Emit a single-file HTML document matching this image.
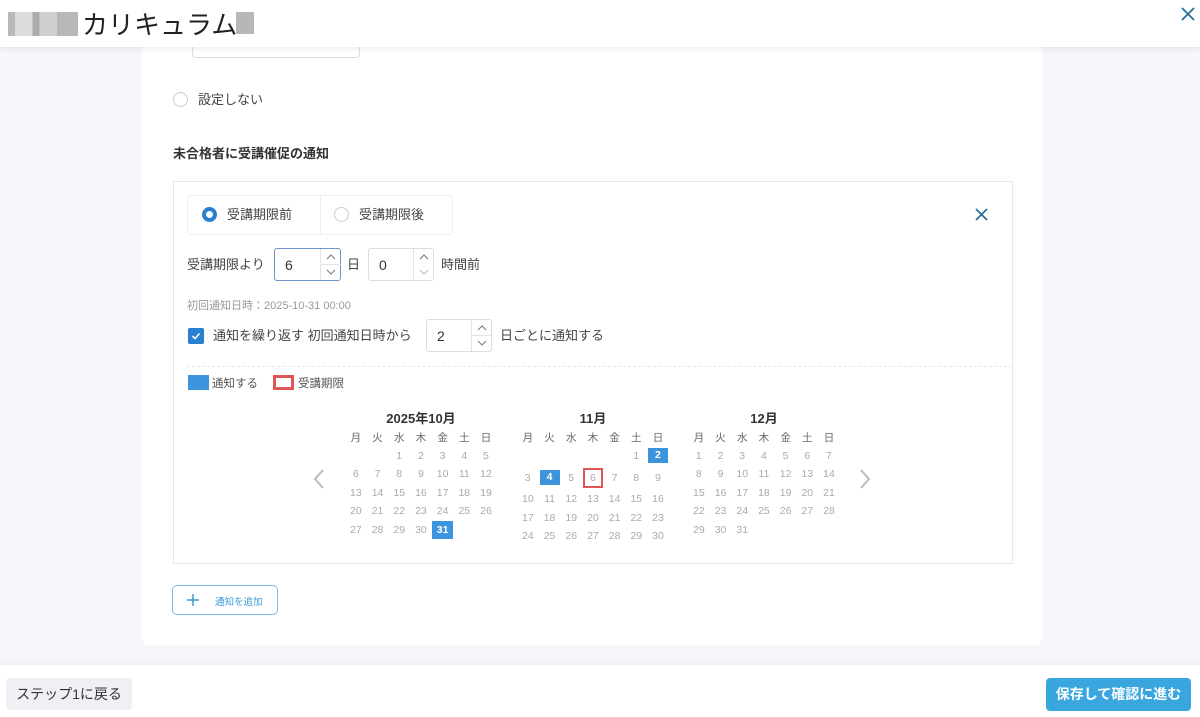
<!DOCTYPE html>
<html><head><meta charset="utf-8"><style>
*{box-sizing:border-box;margin:0;padding:0}
body{width:1200px;height:717px;overflow:hidden;background:#f5f7fa;font-family:"Liberation Sans","Noto Sans CJK JP",sans-serif;color:#333;position:relative}
.a{position:absolute}
.hdr{left:0;top:0;width:1200px;height:47px;background:#fff;box-shadow:0 2px 6px rgba(0,0,0,.08);z-index:2}
.card{left:142px;top:40px;width:900px;height:605px;background:#fff;border-radius:6px}
.foot{left:0;top:665px;width:1200px;height:52px;background:#fff;box-shadow:0 -2px 6px rgba(0,0,0,.05)}
.radio{width:15px;height:15px;border:1px solid #ccc;border-radius:50%;background:#fff}
.t13{font-size:13px;color:#444;line-height:16px}
.num{border:1px solid #ddd;border-radius:3px;background:#fff;height:33px}
.sp{position:absolute;right:0;top:0;width:20px;height:100%;border-left:1px solid #e3e3e3}
table{border-collapse:collapse;position:absolute;font-size:10.5px;color:#aaa}
td{width:21.7px;text-align:center;height:18.5px;padding:0}
tr.h td{color:#666}
td.b{background:#3b94dc;color:#fff;font-weight:bold}
.bx{display:inline-block;width:20px;height:15px;line-height:15px;background:#3b94dc;color:#fff;font-weight:bold}
.rx{display:inline-block;width:20px;height:20px;line-height:16px;border:2px solid #e05555}
.mt{font-size:13px;font-weight:bold;color:#333;position:absolute;text-align:center;width:152px}
</style></head><body>
<div class="a hdr">
<div class="a" style="left:8px;top:12px;width:70px;height:24px;background:linear-gradient(90deg,#999 0 10%,#ccc 10% 35%,#888 35% 45%,#bbb 45% 70%,#999 70%);opacity:.7"></div>
<div class="a" style="left:82px;top:5px;font-size:26px;color:#222">カリキュラム</div>
<div class="a" style="left:236px;top:12px;width:18px;height:22px;background:#999;opacity:.7"></div>
<svg class="a" style="left:1181px;top:7px" width="14" height="14"><path d="M1 1L13 13M13 1L1 13" stroke="#2a6f9a" stroke-width="1.8"/></svg>
</div>
<div class="a card"></div>
<div class="a" style="left:192px;top:40px;width:168px;height:18px;border:1px solid #ddd;border-top:0;border-radius:0 0 4px 4px"></div>
<div class="a radio" style="left:173px;top:92px"></div>
<div class="a t13" style="left:198px;top:92px">設定しない</div>
<div class="a" style="left:173px;top:143px;font-size:13px;font-weight:bold;color:#333">未合格者に受講催促の通知</div>
<div class="a" style="left:173px;top:181px;width:840px;height:383px;border:1px solid #e6e6e6"></div>
<div class="a" style="left:187px;top:195px;width:266px;height:40px;border:1px solid #eee;border-radius:4px"></div>
<div class="a" style="left:320px;top:195px;width:1px;height:40px;background:#eee"></div>
<div class="a radio" style="left:202px;top:207px;border:4.5px solid #2b7fd0"></div>
<div class="a t13" style="left:227px;top:207px">受講期限前</div>
<div class="a radio" style="left:334px;top:207px"></div>
<div class="a t13" style="left:359px;top:207px">受講期限後</div>
<svg class="a" style="left:975px;top:208px" width="13" height="13"><path d="M1 1L12 12M12 1L1 12" stroke="#2a6f9a" stroke-width="1.8"/></svg>
<div class="a t13" style="left:187px;top:257px">受講期限より</div>
<div class="a num" style="left:274px;top:248px;width:67px;border-color:#6f95c8"><span class="a" style="left:10px;top:8px;font-size:14px">6</span><div class="sp"><svg width="20" height="31"><path d="M6 10L10 6L14 10M6 21L10 25L14 21" stroke="#777" fill="none"/><path d="M0 15.5H20" stroke="#e3e3e3"/></svg></div></div>
<div class="a t13" style="left:347px;top:257px">日</div>
<div class="a num" style="left:368px;top:248px;width:66px"><span class="a" style="left:10px;top:8px;font-size:14px">0</span><div class="sp"><svg width="20" height="31"><path d="M6 10L10 6L14 10" stroke="#777" fill="none"/><path d="M6 21L10 25L14 21" stroke="#bbb" fill="none"/></svg></div></div>
<div class="a t13" style="left:441px;top:257px">時間前</div>
<div class="a" style="left:187px;top:297px;font-size:11px;color:#999">初回通知日時：2025-10-31 00:00</div>
<div class="a" style="left:188px;top:328px;width:16px;height:16px;background:#2b7fd0;border-radius:2px"><svg width="16" height="16"><path d="M4.5 8L7 10.5L11.5 5.5" stroke="#fff" stroke-width="1.5" fill="none"/></svg></div>
<div class="a t13" style="left:213px;top:328px">通知を繰り返す 初回通知日時から</div>
<div class="a num" style="left:426px;top:319px;width:66px"><span class="a" style="left:10px;top:8px;font-size:14px">2</span><div class="sp"><svg width="20" height="31"><path d="M6 10L10 6L14 10M6 21L10 25L14 21" stroke="#777" fill="none"/><path d="M0 15.5H20" stroke="#e3e3e3"/></svg></div></div>
<div class="a t13" style="left:500px;top:328px">日ごとに通知する</div>
<div class="a" style="left:187px;top:366px;width:825px;border-top:1px dashed #e6e6e6"></div>
<div class="a" style="left:188px;top:375px;width:21px;height:15px;background:#3b94dc"></div>
<div class="a" style="left:212px;top:375px;font-size:11.5px;color:#555">通知する</div>
<div class="a" style="left:273px;top:375px;width:21px;height:15px;border:3px solid #e05555"></div>
<div class="a" style="left:298px;top:375px;font-size:11.5px;color:#555">受講期限</div>
<svg class="a" style="left:313px;top:468px" width="12" height="22"><path d="M10 2L2 11L10 20" stroke="#bbb" stroke-width="2" fill="none"/></svg>
<svg class="a" style="left:859px;top:468px" width="12" height="22"><path d="M2 2L10 11L2 20" stroke="#bbb" stroke-width="2" fill="none"/></svg>
<div class="mt" style="left:345px;top:408px">2025年10月</div>
<div class="mt" style="left:517px;top:408px">11月</div>
<div class="mt" style="left:688px;top:408px">12月</div>
<table style="left:345px;top:428px">
<tr class="h"><td>月</td><td>火</td><td>水</td><td>木</td><td>金</td><td>土</td><td>日</td></tr>
<tr><td></td><td></td><td>1</td><td>2</td><td>3</td><td>4</td><td>5</td></tr>
<tr><td>6</td><td>7</td><td>8</td><td>9</td><td>10</td><td>11</td><td>12</td></tr>
<tr><td>13</td><td>14</td><td>15</td><td>16</td><td>17</td><td>18</td><td>19</td></tr>
<tr><td>20</td><td>21</td><td>22</td><td>23</td><td>24</td><td>25</td><td>26</td></tr>
<tr><td>27</td><td>28</td><td>29</td><td>30</td><td class="b">31</td><td></td><td></td></tr>
</table>
<table style="left:517px;top:428px">
<tr class="h"><td>月</td><td>火</td><td>水</td><td>木</td><td>金</td><td>土</td><td>日</td></tr>
<tr><td></td><td></td><td></td><td></td><td></td><td>1</td><td><span class="bx">2</span></td></tr>
<tr style="height:25px"><td>3</td><td><span class="bx">4</span></td><td>5</td><td><span class="rx">6</span></td><td>7</td><td>8</td><td>9</td></tr>
<tr><td>10</td><td>11</td><td>12</td><td>13</td><td>14</td><td>15</td><td>16</td></tr>
<tr><td>17</td><td>18</td><td>19</td><td>20</td><td>21</td><td>22</td><td>23</td></tr>
<tr><td>24</td><td>25</td><td>26</td><td>27</td><td>28</td><td>29</td><td>30</td></tr>
</table>
<table style="left:688px;top:428px">
<tr class="h"><td>月</td><td>火</td><td>水</td><td>木</td><td>金</td><td>土</td><td>日</td></tr>
<tr><td>1</td><td>2</td><td>3</td><td>4</td><td>5</td><td>6</td><td>7</td></tr>
<tr><td>8</td><td>9</td><td>10</td><td>11</td><td>12</td><td>13</td><td>14</td></tr>
<tr><td>15</td><td>16</td><td>17</td><td>18</td><td>19</td><td>20</td><td>21</td></tr>
<tr><td>22</td><td>23</td><td>24</td><td>25</td><td>26</td><td>27</td><td>28</td></tr>
<tr><td>29</td><td>30</td><td>31</td><td></td><td></td><td></td><td></td></tr>
</table>
<div class="a" style="left:172px;top:585px;width:106px;height:30px;border:1px solid #7fbde6;border-radius:5px"></div>
<svg class="a" style="left:186px;top:593px" width="14" height="14"><path d="M7 1V13M1 7H13" stroke="#3a9ad8" stroke-width="1.5"/></svg>
<div class="a" style="left:215px;top:594px;font-size:9.5px;color:#3a9ad8">通知を追加</div>
<div class="a foot"></div>
<div class="a" style="left:6px;top:678px;width:126px;height:32px;background:#eef0f3;border-radius:4px;font-size:14px;color:#333;text-align:center;line-height:32px">ステップ1に戻る</div>
<div class="a" style="left:1046px;top:678px;width:145px;height:33px;background:#3aa6e0;border-radius:4px;font-size:14px;color:#fff;font-weight:bold;text-align:center;line-height:33px">保存して確認に進む</div>
</body></html>
